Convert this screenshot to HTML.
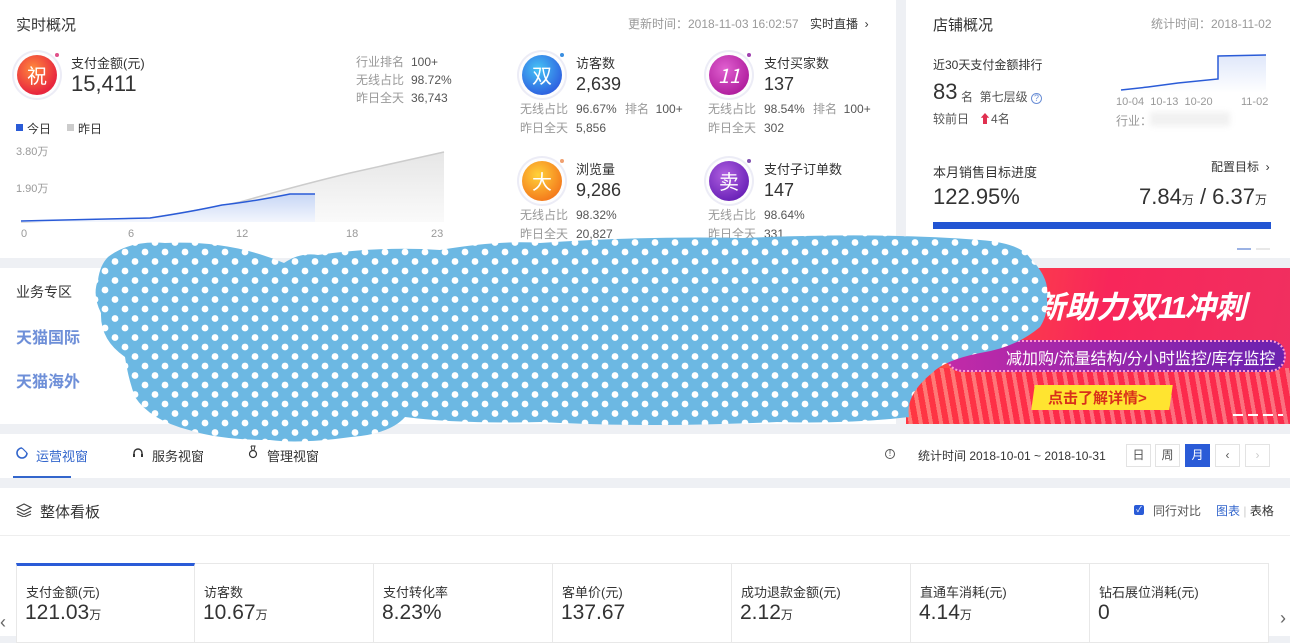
<!DOCTYPE html>
<html><head><meta charset="utf-8">
<style>
*{margin:0;padding:0;box-sizing:border-box}
body{width:1290px;height:636px;overflow:hidden;background:#eef0f4;font-family:"Liberation Sans","Noto Sans CJK SC",sans-serif;color:#333;position:relative}
.a{position:absolute;white-space:nowrap}
.card{position:absolute;background:#fff}
.g{color:#999;font-size:12px}
.s12{font-size:12px}
.ic{position:absolute;width:40px;height:40px;border-radius:50%;color:#fff;font-size:20px;text-align:center;line-height:40px;font-family:"Noto Sans CJK SC",sans-serif;box-shadow:0 0 0 3px rgba(255,255,255,.9),0 0 0 5px rgba(200,200,230,.35)}
.dot{position:absolute;width:4px;height:4px;border-radius:50%}
.btn{position:absolute;top:444px;width:25px;height:23px;border:1px solid #e3e3e3;font-size:12px;text-align:center;line-height:21px;color:#555;background:#fff}
.cell{position:absolute;top:563px;height:80px;width:179px;border:1px solid #e8e8e8;border-left:none;background:#fff}
.cell .l{position:absolute;left:9px;top:18px;font-size:13px;color:#333}
.cell .v{position:absolute;left:8px;top:37px;font-size:21px;color:#333}
.cell .v small{font-size:12px}
</style></head><body>

<!-- card 1 -->
<div class="card" style="left:0;top:0;width:896px;height:258px"></div>
<div class="a" style="left:16px;top:14px;font-size:15px">实时概况</div>
<div class="a g" style="left:628px;top:15px">更新时间：2018-11-03 16:02:57</div>
<div class="a s12" style="left:810px;top:15px;color:#333">实时直播 &nbsp;›</div>

<div class="ic" style="left:17px;top:55px;background:radial-gradient(circle at 40% 35%,#ff8a3c,#e8263e 70%)">祝</div>
<div class="dot" style="left:55px;top:53px;background:#e0508a"></div>
<div class="a" style="left:71px;top:53px;font-size:13px">支付金额(元)</div>
<div class="a" style="left:71px;top:71px;font-size:22px">15,411</div>
<div class="a g" style="left:356px;top:53px;line-height:18px">行业排名<br>无线占比<br>昨日全天</div>
<div class="a s12" style="left:411px;top:53px;line-height:18px;color:#555">100+<br>98.72%<br>36,743</div>

<div class="a" style="left:16px;top:124px;width:7px;height:7px;background:#2a5bd7"></div>
<div class="a s12" style="left:27px;top:120px">今日</div>
<div class="a" style="left:67px;top:124px;width:7px;height:7px;background:#ccc"></div>
<div class="a s12" style="left:78px;top:120px">昨日</div>
<div class="a g" style="left:16px;top:143px;font-size:11px">3.80万</div>
<div class="a g" style="left:16px;top:180px;font-size:11px">1.90万</div>
<svg class="a" style="left:0;top:140px" width="450" height="90">
<defs><linearGradient id="gg" x1="0" y1="0" x2="0" y2="1"><stop offset="0" stop-color="#e6e6e6"/><stop offset="1" stop-color="#fafafa"/></linearGradient>
<linearGradient id="bg" x1="0" y1="0" x2="0" y2="1"><stop offset="0" stop-color="#c7d6f5"/><stop offset="1" stop-color="#f3f6fd"/></linearGradient></defs>
<path d="M21 82 L150 78 Q200 70 240 62 Q300 45 350 33 Q400 22 444 12 L444 82 Z" fill="url(#gg)"/>
<path d="M21 82 L150 78 Q200 70 240 62 Q300 45 350 33 Q400 22 444 12" fill="none" stroke="#ccc" stroke-width="1.5"/>
<path d="M21 81 L150 78 Q190 72 222 65 Q250 62 290 54 L315 54 L315 82 L21 82Z" fill="url(#bg)"/>
<path d="M21 81 L150 78 Q190 72 222 65 Q250 62 290 54 L315 54" fill="none" stroke="#2a5bd7" stroke-width="1.5"/>
</svg>
<div class="a g" style="left:21px;top:228px;font-size:11px">0</div>
<div class="a g" style="left:128px;top:228px;font-size:11px">6</div>
<div class="a g" style="left:236px;top:228px;font-size:11px">12</div>
<div class="a g" style="left:346px;top:228px;font-size:11px">18</div>
<div class="a g" style="left:431px;top:228px;font-size:11px">23</div>

<!-- middle metrics -->
<div class="ic" style="left:522px;top:55px;background:radial-gradient(circle at 40% 35%,#46c4f5,#2e60e0 75%)">双</div>
<div class="dot" style="left:560px;top:53px;background:#3a8ee0"></div>
<div class="ic" style="left:709px;top:55px;background:radial-gradient(circle at 40% 35%,#e060d0,#b01e9e 75%);font-style:italic">11</div>
<div class="dot" style="left:747px;top:53px;background:#a040b0"></div>
<div class="ic" style="left:522px;top:161px;background:radial-gradient(circle at 40% 35%,#ffd23a,#f47a1c 75%)">大</div>
<div class="dot" style="left:560px;top:159px;background:#f0a070"></div>
<div class="ic" style="left:709px;top:161px;background:radial-gradient(circle at 40% 35%,#b060e0,#6a22b8 75%)">卖</div>
<div class="dot" style="left:747px;top:159px;background:#8050b0"></div>

<div class="a" style="left:576px;top:53px;font-size:13px">访客数</div>
<div class="a" style="left:576px;top:74px;font-size:18px">2,639</div>
<div class="a g" style="left:520px;top:100px;line-height:19px">无线占比<br>昨日全天</div>
<div class="a s12" style="left:576px;top:100px;line-height:19px;color:#555">96.67%<br>5,856</div>
<div class="a g" style="left:625px;top:100px">排名 <span style="color:#555">&nbsp;100+</span></div>

<div class="a" style="left:764px;top:53px;font-size:13px">支付买家数</div>
<div class="a" style="left:764px;top:74px;font-size:18px">137</div>
<div class="a g" style="left:708px;top:100px;line-height:19px">无线占比<br>昨日全天</div>
<div class="a s12" style="left:764px;top:100px;line-height:19px;color:#555">98.54%<br>302</div>
<div class="a g" style="left:813px;top:100px">排名 <span style="color:#555">&nbsp;100+</span></div>

<div class="a" style="left:576px;top:159px;font-size:13px">浏览量</div>
<div class="a" style="left:576px;top:180px;font-size:18px">9,286</div>
<div class="a g" style="left:520px;top:206px;line-height:19px">无线占比<br>昨日全天</div>
<div class="a s12" style="left:576px;top:206px;line-height:19px;color:#555">98.32%<br>20,827</div>

<div class="a" style="left:764px;top:159px;font-size:13px">支付子订单数</div>
<div class="a" style="left:764px;top:180px;font-size:18px">147</div>
<div class="a g" style="left:708px;top:206px;line-height:19px">无线占比<br>昨日全天</div>
<div class="a s12" style="left:764px;top:206px;line-height:19px;color:#555">98.64%<br>331</div>

<!-- right card -->
<div class="card" style="left:906px;top:0;width:384px;height:258px"></div>
<div class="a" style="left:933px;top:14px;font-size:15px">店铺概况</div>
<div class="a g" style="left:1151px;top:15px">统计时间：2018-11-02</div>
<div class="a" style="left:933px;top:56px;font-size:12px">近30天支付金额排行</div>
<div class="a" style="left:933px;top:79px;font-size:22px">83</div>
<div class="a s12" style="left:961px;top:88px;color:#555">名 &nbsp;第七层级 <span style="display:inline-block;width:11px;height:11px;border:1px solid #6b8fd6;border-radius:50%;color:#6b8fd6;font-size:9px;line-height:9px;text-align:center">?</span></div>
<div class="a s12" style="left:933px;top:110px;color:#555">较前日 &nbsp;&nbsp;<span style="color:#e03050">⬆</span>4名</div>
<svg class="a" style="left:1118px;top:50px" width="150" height="45">
<defs><linearGradient id="mg" x1="0" y1="0" x2="0" y2="1"><stop offset="0" stop-color="#dfe7fa"/><stop offset="1" stop-color="#fff"/></linearGradient></defs>
<path d="M3 40 L30 37 L60 33 L100 29 L100 6 L148 5 L148 43 L3 43Z" fill="url(#mg)"/>
<path d="M3 40 L30 37 L60 33 L100 29 L100 6 L148 5" fill="none" stroke="#2a5bd7" stroke-width="1.5"/>
</svg>
<div class="a g" style="left:1116px;top:96px;font-size:11px">10-04 &nbsp;10-13 &nbsp;10-20</div>
<div class="a g" style="left:1241px;top:96px;font-size:11px">11-02</div>
<div class="a g" style="left:1116px;top:112px">行业：</div>
<div class="a" style="left:1150px;top:112px;width:80px;height:14px;background:#f1f1f1;filter:blur(3px)"></div>
<div class="a" style="left:933px;top:162px;font-size:13px">本月销售目标进度</div>
<div class="a s12" style="left:1211px;top:158px">配置目标 &nbsp;›</div>
<div class="a" style="left:933px;top:184px;font-size:22px">122.95%</div>
<div class="a" style="left:1139px;top:184px;font-size:22px">7.84<small style="font-size:12px">万</small> / 6.37<small style="font-size:12px">万</small></div>
<div class="a" style="left:933px;top:222px;width:338px;height:7px;background:#2255d3"></div>
<div class="a" style="left:1237px;top:248px;width:14px;height:2px;background:#9bb2e4"></div>
<div class="a" style="left:1256px;top:248px;width:14px;height:2px;background:#e8e8e8"></div>

<!-- row 2 -->
<div class="card" style="left:0;top:268px;width:896px;height:156px"></div>
<div class="a" style="left:16px;top:282px;font-size:14px">业务专区</div>
<div class="a" style="left:16px;top:324px;font-size:16px;font-weight:bold;color:#6e8fd8">天猫国际</div>
<div class="a" style="left:16px;top:368px;font-size:16px;font-weight:bold;color:#6e8fd8">天猫海外</div>

<div class="a" style="left:906px;top:268px;width:384px;height:156px;overflow:hidden;background:linear-gradient(100deg,#ff5a3a,#f8265a 50%,#f03060)">
 <div class="a" style="left:-60px;top:100px;width:500px;height:80px;background:repeating-linear-gradient(80deg,#ff2a44 0 6px,#ff8c8c 6px 10px);opacity:.7"></div>
 <div class="a" style="left:128px;top:14px;font-size:31px;font-weight:bold;font-style:italic;color:#fff">新助力双<span style="letter-spacing:-3px">11</span>冲刺</div>
 <div class="a" style="left:40px;top:72px;width:340px;height:32px;border-radius:16px;background:linear-gradient(90deg,#c22aa8,#6a22b0);border:2px dotted #ff9cd0"></div>
 <div class="a" style="left:100px;top:77px;font-size:16px;color:#fff">减加购/流量结构/分小时监控/库存监控</div>
 <div class="a" style="left:127px;top:117px;width:138px;height:25px;background:#ffe430;transform:skewX(-8deg)"></div>
 <div class="a" style="left:142px;top:119px;font-size:15px;font-weight:bold;color:#d8301a">点击了解详情&gt;</div>
 <div class="a" style="left:327px;top:146px;width:50px;height:2px;background:repeating-linear-gradient(90deg,#fff 0 10px,transparent 10px 15px)"></div>
</div>

<!-- tab bar -->
<div class="card" style="left:0;top:434px;width:1290px;height:44px"></div>
<svg class="a" style="left:16px;top:447px" width="12" height="12"><path d="M6 1 A5 5 0 1 0 11 6" fill="none" stroke="#3366cc" stroke-width="1.6"/><path d="M6 1 L11 6" stroke="#3366cc" stroke-width="1.2"/></svg>
<div class="a s12" style="left:36px;top:446px;font-size:13px;color:#3366cc">运营视窗</div>
<div class="a" style="left:13px;top:476px;width:58px;height:2px;background:#3366cc"></div>
<svg class="a" style="left:132px;top:447px" width="12" height="12"><path d="M2 8 V6 A4 4 0 0 1 10 6 V8" fill="none" stroke="#333" stroke-width="1.4"/><rect x="1" y="7" width="2" height="3" fill="#333"/><rect x="9" y="7" width="2" height="3" fill="#333"/></svg>
<div class="a" style="left:152px;top:446px;font-size:13px">服务视窗</div>
<svg class="a" style="left:248px;top:445px" width="10" height="14"><circle cx="5" cy="9" r="3.5" fill="none" stroke="#333" stroke-width="1.2"/><path d="M3 1 H7 L6 5 M4 5 L3 1" fill="none" stroke="#333"/></svg>
<div class="a" style="left:267px;top:446px;font-size:13px">管理视窗</div>
<div class="a" style="left:885px;top:449px;width:10px;height:10px;border:1px solid #555;border-radius:50%;font-size:8px;line-height:8px;text-align:center">!</div>
<div class="a s12" style="left:918px;top:447px">统计时间 2018-10-01 ~ 2018-10-31</div>
<div class="btn" style="left:1126px">日</div>
<div class="btn" style="left:1155px">周</div>
<div class="btn" style="left:1185px;background:#2a5bd7;color:#fff;border-color:#2a5bd7">月</div>
<div class="btn" style="left:1215px">‹</div>
<div class="btn" style="left:1245px;color:#ccc">›</div>

<!-- panel -->
<div class="card" style="left:0;top:488px;width:1290px;height:148px"></div>
<svg class="a" style="left:16px;top:503px" width="16" height="14"><path d="M8 1 L15 4.5 L8 8 L1 4.5Z M1 8 L8 11.5 L15 8 M1 11 L8 14 L15 11" fill="none" stroke="#444" stroke-width="1.2"/></svg>
<div class="a" style="left:40px;top:501px;font-size:15px">整体看板</div>
<div class="a" style="left:1134px;top:505px;width:10px;height:10px;background:#2a5bd7;border-radius:2px;color:#fff;font-size:8px;line-height:10px;text-align:center">✓</div>
<div class="a s12" style="left:1153px;top:502px;color:#555">同行对比</div>
<div class="a s12" style="left:1216px;top:502px;color:#3366cc">图表 <span style="color:#ccc">|</span> <span style="color:#333">表格</span></div>
<div class="a" style="left:0;top:535px;width:1290px;height:1px;background:#eee"></div>

<div class="cell" style="left:16px;border-left:1px solid #e8e8e8;border-top:3px solid #2a5bd7"><div class="l" style="top:16px">支付金额(元)</div><div class="v" style="top:35px">121.03<small>万</small></div></div>
<div class="cell" style="left:195px"><div class="l">访客数</div><div class="v">10.67<small>万</small></div></div>
<div class="cell" style="left:374px"><div class="l">支付转化率</div><div class="v">8.23%</div></div>
<div class="cell" style="left:553px"><div class="l">客单价(元)</div><div class="v">137.67</div></div>
<div class="cell" style="left:732px"><div class="l">成功退款金额(元)</div><div class="v">2.12<small>万</small></div></div>
<div class="cell" style="left:911px"><div class="l">直通车消耗(元)</div><div class="v">4.14<small>万</small></div></div>
<div class="cell" style="left:1090px"><div class="l">钻石展位消耗(元)</div><div class="v">0</div></div>
<div class="a" style="left:0;top:612px;font-size:18px;color:#666">‹</div>
<div class="a" style="left:1280px;top:608px;font-size:18px;color:#666">›</div>

<!-- polka dot blob -->
<svg class="a" style="left:0;top:0" width="1290" height="636">
<defs><pattern id="pd" width="20" height="19" patternUnits="userSpaceOnUse">
<rect width="20" height="19" fill="#6cb8e3"/>
<circle cx="5" cy="5" r="3.4" fill="#fff"/><circle cx="15" cy="14.5" r="3.4" fill="#fff"/></pattern></defs>
<path d="M108 257 Q130 240 165 243 Q230 240 284 263 Q300 252 318 255 Q380 246 440 250 Q500 240 540 243 Q640 236 743 238 Q880 232 980 240 Q1020 243 1030 258 Q1050 278 1047 297 Q1048 315 1040 327 Q1015 348 980 353 Q945 360 932 373 Q905 395 909 417 Q850 424 777 422 Q650 428 540 422 Q460 424 405 417 Q390 434 351 437 Q300 444 270 440 Q220 440 189 430 Q150 420 135 397 Q128 378 125 357 Q100 340 101 313 Q92 295 98 280 Q100 265 108 257Z" fill="url(#pd)"/>
</svg>
</body></html>
